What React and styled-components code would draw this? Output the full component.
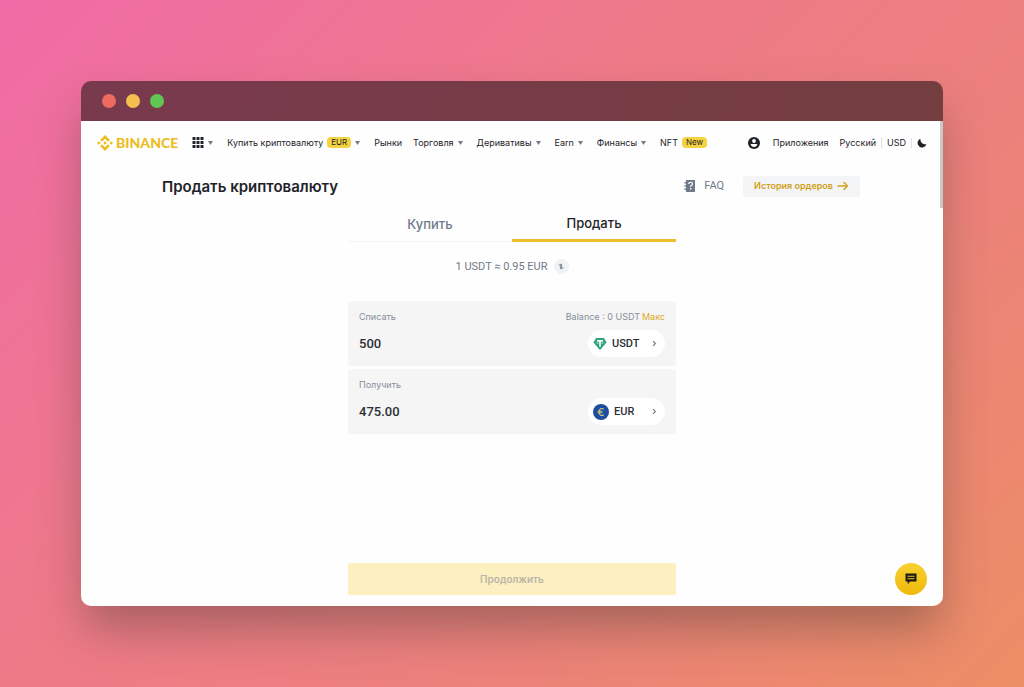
import { useState } from 'react';
import styled, { createGlobalStyle } from 'styled-components';

const GlobalStyle = createGlobalStyle`
    * {
        box-sizing: border-box;
    }

    body {
        margin: 0;
        color: #1e2329;
        font-family: Inter, 'Noto Sans', sans-serif;
        font-size: 9px;
        line-height: 12px;
    }

    button, input {
        margin: 0;
        padding: 0;
        border: 0;
        background: none;
        color: inherit;
        font: inherit;
    }

    button {
        cursor: pointer;
    }

    a {
        color: inherit;
        text-decoration: none;
    }

    svg {
        display: block;
        flex: none;
    }
`

const Stage = styled.div`
    display: flex;
    min-height: 100vh;
    padding: 81px;
    background: linear-gradient(135deg, #f06ba6 0%, #ee7a88 40%, #ec7f7e 62%, #ec8e65 100%);
`

const Window = styled.div`
    display: flex;
    flex-direction: column;
    flex: 1;
    min-width: 0;
    border-radius: 10px;
    overflow: hidden;
    box-shadow: 0 26px 46px -4px rgba(70, 60, 50, 0.42);
`

const TitleBar = styled.div`
    display: flex;
    align-items: center;
    gap: 10px;
    height: 40px;
    padding: 0 21px;
    background: linear-gradient(100deg, #78394d, #743e40);
`

const Dot = styled.span`
    width: 14px;
    height: 14px;
    border-radius: 50%;
    background: ${({ color }) => color};
`

const Page = styled.div`
    position: relative;
    display: flex;
    flex-direction: column;
    flex: 1;
    background: #fefefe;
`

const ScrollThumb = styled.div`
    position: absolute;
    top: 0;
    right: 0;
    width: 3px;
    height: 87px;
    background: #c9c9c9;
`

const Header = styled.header`
    display: flex;
    align-items: center;
    justify-content: space-between;
    height: 43px;
    padding: 0 16px;
    white-space: nowrap;
`

const Nav = styled.nav`
    display: flex;
    align-items: center;
    gap: 14px;
`

const Logo = styled.a`
    display: flex;
    align-items: center;
    gap: 3px;
    color: #ecbd22;
    font-family: Lato, sans-serif;
    font-size: 14px;
    font-weight: 900;
    line-height: 16px;
`

const NavButton = styled.button`
    display: flex;
    align-items: center;
    gap: 4px;
`

const NavLink = styled.a`
    display: flex;
    align-items: center;
    gap: 4px;
`

const NavPair = styled.div`
    display: flex;
    gap: 11px;
`

const Tag = styled.span`
    padding: 0 4px;
    border-radius: 4px;
    background: #f5d33f;
    font-size: 8px;
    line-height: 11px;
`

const Side = styled.div`
    display: flex;
    align-items: center;
    gap: 11px;
`

const ProfileButton = styled(NavButton)`
    margin-right: 2px;
`

const Locale = styled.div`
    display: flex;
    align-items: center;
    gap: 5px;
`

const Divider = styled.span`
    width: 1px;
    height: 10px;
    background: #dcdfe3;
`

const TitleRow = styled.div`
    display: flex;
    align-items: center;
    justify-content: space-between;
    margin-top: 10px;
    padding: 0 83px 0 81px;
`

const Title = styled.h1`
    margin: 0;
    padding-top: 2px;
    font-size: 15px;
    font-weight: 600;
    line-height: 22px;
`

const Links = styled.div`
    display: flex;
    align-items: center;
    gap: 19px;
`

const FaqLink = styled.a`
    display: flex;
    align-items: center;
    gap: 8px;
    color: #707a8a;
    font-family: Roboto, sans-serif;
    font-size: 11px;
`

const HistoryLink = styled.a`
    display: flex;
    align-items: center;
    gap: 4px;
    height: 21px;
    padding: 0 11px;
    border-radius: 2px;
    background: #f4f5f6;
    color: #d0a021;
    font-weight: 600;
`

const Trade = styled.form`
    display: flex;
    flex-direction: column;
    flex: 1;
    width: 328px;
    max-width: 100%;
    margin: 0 auto;
    padding: 9px 0 11px;
`

const Tabs = styled.div`
    display: flex;
`

const Tab = styled.button`
    flex: 1;
    height: 35px;
    border-bottom: ${({ $active }) => ($active ? '3px solid #ecbf2d' : '1px solid #f3f4f5')};
    color: ${({ $active }) => ($active ? '#1e2329' : '#707a8a')};
    font-size: 13px;
    font-weight: 500;
`

const Rate = styled.div`
    display: flex;
    align-items: center;
    justify-content: center;
    gap: 6px;
    margin: 17px 0 27px;
    color: #707a8a;
    font-family: Roboto, sans-serif;
    font-size: 11px;
`

const SwapButton = styled.button`
    display: grid;
    place-items: center;
    width: 15px;
    height: 15px;
    border-radius: 50%;
    background: #f1f2f4;
`

const Fields = styled.div`
    display: grid;
    gap: 3px;
`

const Field = styled.div`
    padding: 10px 11px 9px;
    border-radius: 4px;
    background: #f5f5f5;
`

const FieldRow = styled.div`
    display: flex;
    align-items: center;
    justify-content: space-between;
    color: #858d9a;
`

const AmountRow = styled(FieldRow)`
    margin-top: 7px;
    color: #2b3036;
    font-family: Roboto, sans-serif;
`

const Amount = styled.input`
    flex: 1;
    min-width: 0;
    font-size: 13px;
    font-weight: 500;
    outline: none;
`

const Balance = styled.span`
    display: flex;
    gap: 2px;
`

const MaxButton = styled.button`
    color: #dcab1c;
`

const Currency = styled.button`
    display: flex;
    align-items: center;
    gap: 5px;
    width: 77px;
    height: 27px;
    padding: 0 8px 0 5px;
    border-radius: 14px;
    background: #fff;
    font-size: 11px;
    font-weight: 500;

    svg:last-child {
        margin-left: auto;
    }
`

const Submit = styled.button`
    height: 32px;
    margin-top: auto;
    border-radius: 2px;
    background: #fdf0c0;
    color: #b9b5a8;
    font-size: 10px;
    font-weight: 600;
`

const ChatButton = styled.button`
    position: absolute;
    right: 16px;
    bottom: 11px;
    display: grid;
    place-items: center;
    width: 32px;
    height: 32px;
    border-radius: 50%;
    background: linear-gradient(#f8d12f, #efb90b);
`

const LogoMark = () => (
    <svg width="16" height="16" viewBox="0 0 126 126" fill="currentColor">
        <path d="M38.7 53.2 63 28.9l24.3 24.3 14.2-14.1L63 .6 24.6 39.1zM.5 63l14.1-14.1L28.8 63 14.6 77.2zM38.7 72.8 63 97.1l24.3-24.3 14.2 14.1L63 125.5 24.6 87zM97.3 63l14.1-14.1L125.6 63l-14.2 14.2z" />
        <path d="M77.4 63 63 48.6 48.7 63 63 77.4z" />
    </svg>
)

const GridIcon = () => (
    <svg width="12" height="12" viewBox="0 0 12 12" fill="#1e2329">
        {[0, 4, 8].map((y) => [0, 4, 8].map((x) => (
            <rect key={`${x}-${y}`} x={x + 0.5} y={y} width="3" height="3" rx=".5" />
        )))}
    </svg>
)

const Caret = () => (
    <svg width="5" height="4" viewBox="0 0 5 4" fill="#777b87">
        <path d="M0 0h5L2.5 4z" />
    </svg>
)

const UserIcon = () => (
    <svg width="12" height="12" viewBox="0 0 12 12">
        <circle cx="6" cy="6" r="6" fill="#1e2329" />
        <circle cx="6" cy="4" r="1.9" fill="#fff" />
        <path d="M2.6 7h6.8C9 9 7.8 9.9 6 9.9S3 9 2.6 7z" fill="#fff" />
    </svg>
)

const MoonIcon = () => (
    <svg width="10" height="10" viewBox="0 0 10 10" fill="#1e2329">
        <path d="M3.4.7A4.5 4.5 0 1 0 9.400 6.200C6 7 3 4.500 3.400.7z" />
    </svg>
)

const FaqIcon = () => (
    <svg width="12" height="14" viewBox="0 0 12 14">
        <path d="M2 1h9v12H2v-2H.5V9.500H2v-1.800H.5V6.200H2V4.500H.5V3H2z" fill="#707a8a" />
        <path d="M4.700 4.900c0-2.200 3.800-2.200 3.800.1 0 1.400-1.900 1.300-1.900 3" fill="none" stroke="#fff" strokeWidth="1.200" />
        <path d="M6 9h1.300v1.400H6z" fill="#fff" />
    </svg>
)

const ArrowIcon = () => (
    <svg width="12" height="10" viewBox="0 0 12 10" fill="none" stroke="currentColor" strokeWidth="1.400">
        <path d="M.5 5h10M6.500 1l4 4-4 4" />
    </svg>
)

const SwapIcon = () => (
    <svg width="6" height="7" viewBox="0 0 7 8" fill="none" stroke="#707a8a">
        <path d="M2.800 7V1L1 3M4.200 1v6L6 5" />
    </svg>
)

const ChevronIcon = () => (
    <svg width="5" height="7" viewBox="0 0 5 7" fill="none" stroke="#707a8a" strokeWidth="1.100">
        <path d="M1 1.200 3.400 3.500 1 5.800" />
    </svg>
)

const TetherIcon = () => (
    <svg width="14" height="14" viewBox="0 0 14 14">
        <path d="M3 1h8l2.500 4.500L7 13 .5 5.500z" fill="#2ea07b" />
        <path d="M3.900 2.900h6.200v1.500H7.800v5.400H6.200V4.400H3.900z" fill="#fff" />
        <path d="M5.800 5.200c-3.200.3-3.200 1.200 0 1.400M8.200 5.200c3.200.3 3.200 1.200 0 1.400" fill="none" stroke="#fff" strokeWidth=".4" />
    </svg>
)

const EuroIcon = () => (
    <svg width="16" height="16" viewBox="0 0 16 16">
        <circle cx="8" cy="8" r="8" fill="#1d4fa0" />
        <path d="M10.700 5.300C8.500 3.500 6 5 6 8s2.500 4.500 4.700 2.700M4.700 7.200h4.600M4.700 8.800h4.600" fill="none" stroke="#d5c877" strokeWidth="1.100" />
    </svg>
)

const ChatIcon = () => (
    <svg width="12" height="12" viewBox="0 0 12 12">
        <path d="M.5.500h11v8H5L2.700 11.500V8.500H.5z" fill="#1e1a10" />
        <path d="M2.500 3.200h7M2.500 5.800h7" stroke="#eec21b" strokeWidth="1.100" />
    </svg>
)

const menus = ['Деривативы', 'Earn', 'Финансы'];

const App = () => {
    const [tab, setTab] = useState('sell');
    const [amount, setAmount] = useState('500');
    const [result, setResult] = useState('475.00');

    return (
        <>
            <GlobalStyle />
            <Stage>
                <Window>
                    <TitleBar>
                        <Dot color="#ed6b60" />
                        <Dot color="#f4bf4f" />
                        <Dot color="#61c554" />
                    </TitleBar>
                    <Page>
                        <ScrollThumb />
                        <Header>
                            <Nav>
                                <Logo href="#"><LogoMark />BINANCE</Logo>
                                <NavButton aria-label="Меню"><GridIcon /><Caret /></NavButton>
                                <NavButton>Купить криптовалюту <Tag>EUR</Tag><Caret /></NavButton>
                                <NavPair>
                                    <NavLink href="#">Рынки</NavLink>
                                    <NavButton>Торговля <Caret /></NavButton>
                                </NavPair>
                                {menus.map((name) => (
                                    <NavButton key={name}>{name} <Caret /></NavButton>
                                ))}
                                <NavLink href="#">NFT <Tag>New</Tag></NavLink>
                            </Nav>
                            <Side>
                                <ProfileButton aria-label="Профиль"><UserIcon /></ProfileButton>
                                <NavLink href="#">Приложения</NavLink>
                                <Locale>
                                    <button>Русский</button>
                                    <Divider />
                                    <button>USD</button>
                                    <Divider />
                                    <NavButton aria-label="Тёмная тема"><MoonIcon /></NavButton>
                                </Locale>
                            </Side>
                        </Header>
                        <TitleRow>
                            <Title>Продать криптовалюту</Title>
                            <Links>
                                <FaqLink href="#"><FaqIcon />FAQ</FaqLink>
                                <HistoryLink href="#">История ордеров <ArrowIcon /></HistoryLink>
                            </Links>
                        </TitleRow>
                        <Trade onSubmit={(e) => e.preventDefault()}>
                            <Tabs role="tablist">
                                <Tab type="button" role="tab" aria-selected={tab === 'buy'} $active={tab === 'buy'} onClick={() => setTab('buy')}>Купить</Tab>
                                <Tab type="button" role="tab" aria-selected={tab === 'sell'} $active={tab === 'sell'} onClick={() => setTab('sell')}>Продать</Tab>
                            </Tabs>
                            <Rate>
                                1 USDT ≈ 0.95 EUR
                                <SwapButton type="button" aria-label="Поменять валюты"><SwapIcon /></SwapButton>
                            </Rate>
                            <Fields>
                                <Field>
                                    <FieldRow>
                                        <label htmlFor="spend">Списать</label>
                                        <Balance>Balance : 0 USDT <MaxButton type="button">Макс</MaxButton></Balance>
                                    </FieldRow>
                                    <AmountRow>
                                        <Amount id="spend" value={amount} onChange={(e) => setAmount(e.target.value)} />
                                        <Currency type="button" aria-haspopup="listbox"><TetherIcon />USDT<ChevronIcon /></Currency>
                                    </AmountRow>
                                </Field>
                                <Field>
                                    <FieldRow>
                                        <label htmlFor="receive">Получить</label>
                                    </FieldRow>
                                    <AmountRow>
                                        <Amount id="receive" value={result} onChange={(e) => setResult(e.target.value)} />
                                        <Currency type="button" aria-haspopup="listbox"><EuroIcon />EUR<ChevronIcon /></Currency>
                                    </AmountRow>
                                </Field>
                            </Fields>
                            <Submit disabled>Продолжить</Submit>
                        </Trade>
                        <ChatButton aria-label="Чат"><ChatIcon /></ChatButton>
                    </Page>
                </Window>
            </Stage>
        </>
    );
}

export default App;
